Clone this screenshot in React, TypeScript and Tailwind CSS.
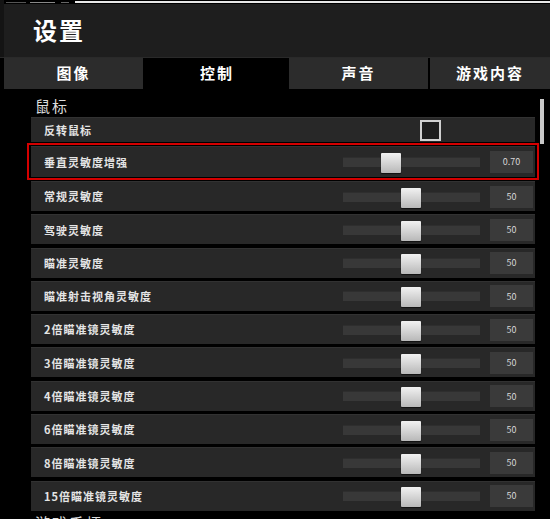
const FONT = { fontFamily: '"Noto Sans CJK SC", "Noto Sans", sans-serif' }

interface SliderRow {
  label: string
  value: string
  thumb: number // thumb left offset inside track, px
}

const ROWS: SliderRow[] = [
  { label: '常规灵敏度', value: '50', thumb: 58 },
  { label: '驾驶灵敏度', value: '50', thumb: 58 },
  { label: '瞄准灵敏度', value: '50', thumb: 58 },
  { label: '瞄准射击视角灵敏度', value: '50', thumb: 58 },
  { label: '2倍瞄准镜灵敏度', value: '50', thumb: 58 },
  { label: '3倍瞄准镜灵敏度', value: '50', thumb: 58 },
  { label: '4倍瞄准镜灵敏度', value: '50', thumb: 58 },
  { label: '6倍瞄准镜灵敏度', value: '50', thumb: 58 },
  { label: '8倍瞄准镜灵敏度', value: '50', thumb: 58 },
  { label: '15倍瞄准镜灵敏度', value: '50', thumb: 58 },
]

const TABS = [
  { label: '图像', w: 'w-[141px]', active: false },
  { label: '控制', w: 'w-[144px]', active: true },
  { label: '声音', w: 'w-[141px]', active: false },
  { label: '游戏内容', w: 'w-[122px]', active: false },
]

function Slider({ value, thumb }: { value: string; thumb: number }) {
  return (
    <div className="flex items-center">
      <div className="relative w-[137px] h-[10px] bg-[#383838] border-t border-[#2e2e2e]">
        <div
          className="absolute top-[-5px] w-[20px] h-[20px] rounded-[1px] bg-gradient-to-b from-[#f2f2f2] to-[#b8b8b8] shadow-[0_1px_1px_rgba(0,0,0,0.6)]"
          style={{ left: thumb }}
        />
      </div>
      <div className="ml-[10px] w-[43px] h-[22px] bg-[#3a3a3a] flex items-center justify-center text-[9px] text-[#d8d8d8]">
        {value}
      </div>
    </div>
  )
}

function Row({ label, children, h = 'h-[30px]' }: { label: string; children?: React.ReactNode; h?: string }) {
  return (
    <div className={`${h} bg-[#282828] border-t border-[#323232] flex items-center justify-between pl-[13px] pr-[2px]`}>
      <span className="text-[11px] font-bold text-[#e4e4e4] tracking-[1px]">{label}</span>
      {children}
    </div>
  )
}

export default function App() {
  return (
    <div className="w-[550px] h-[519px] bg-black overflow-hidden relative" style={FONT}>
      {/* 顶部 */}
      <div className="h-[57px] bg-[#1e1e1e] flex">
        <div className="w-[4px] bg-[#141414]" />
        <div className="flex-1 flex flex-col">
          <div className="h-[4px] bg-black flex items-center">
            <div className="w-[20px] h-[1px] bg-[#555] ml-[2px]" />
            <div className="w-[25px] h-[1px] bg-[#888] ml-[4px]" />
            <div className="w-[8px] h-[1px] bg-[#666] ml-[6px]" />
            <div className="flex-1 h-[2px] bg-[#e8e8e8] ml-[6px]" />
          </div>
          <div className="pl-[29px] pt-[10px] text-[24px] font-bold text-white leading-[32px] tracking-[2px]">设置</div>
        </div>
      </div>

      {/* 标签 */}
      <div className="flex h-[32px] pl-[4px] bg-black border-t border-[#2a2a2a]">
        {TABS.map((t) => (
          <div
            key={t.label}
            className={`${t.w} shrink-0 flex items-center justify-center text-[15px] font-bold text-white tracking-[2px] ${
              t.active ? 'bg-black' : 'bg-[#2c2c2c] border-r-2 border-black'
            }`}
          >
            {t.label}
          </div>
        ))}
      </div>

      {/* 内容 */}
      <div className="pl-[31px] pr-[15px]">
        <div className="h-[28px] flex items-end pl-[4px] pb-[1px] text-[15px] text-[#dcdcdc] tracking-[2px] leading-[20px]">
          鼠标
        </div>

        <Row label="反转鼠标" h="h-[25px]">
          <div className="mr-[92px] w-[21px] h-[21px] border-2 border-[#cfcfcf] bg-[#1c1c1c]" />
        </Row>

        <div className="mt-[1px] -mx-[4px] border-2 border-[#d40000] px-[2px] py-[1px]">
          <Row label="垂直灵敏度增强" h="h-[31px]">
            <Slider value="0.70" thumb={38} />
          </Row>
        </div>

        <div className="mt-[1px] flex flex-col gap-[3.3px]">
          {ROWS.map((r) => (
            <Row key={r.label} label={r.label}>
              <Slider value={r.value} thumb={r.thumb} />
            </Row>
          ))}
        </div>

        <div className="pl-[4px] pt-[2px] text-[15px] text-[#dcdcdc] tracking-[2px] leading-[20px]">游戏手柄</div>
      </div>

      {/* 滚动条 */}
      <div className="absolute left-[540px] top-[99px] w-[4px] h-[45px] bg-[#c8c8c8]" />
    </div>
  )
}
